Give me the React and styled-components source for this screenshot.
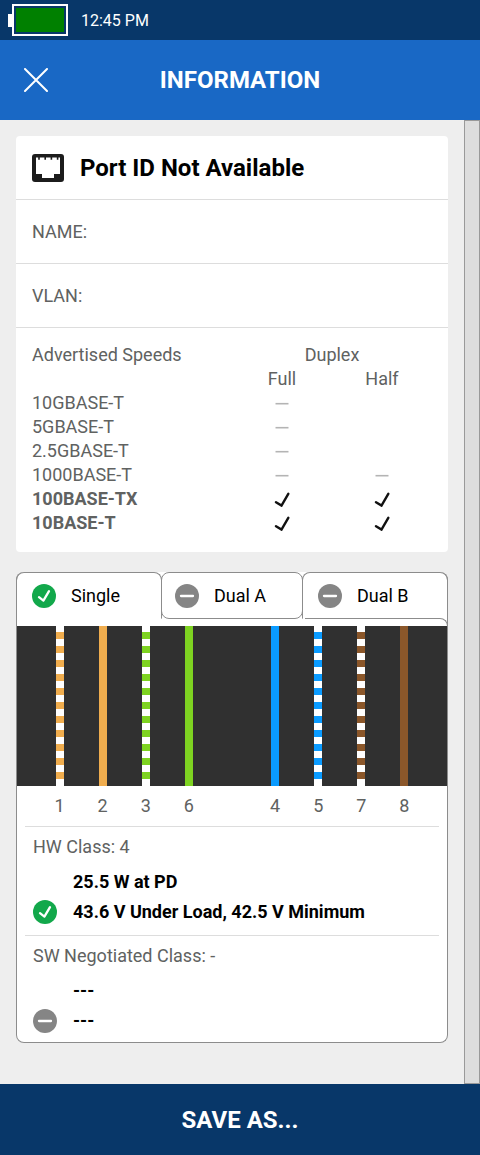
import React, { useState } from 'react'
import styled, { createGlobalStyle } from 'styled-components'

const GlobalStyle = createGlobalStyle`
  * {
    box-sizing: border-box;
  }
  body {
    margin: 0;
    font-family: Roboto, "Liberation Sans", sans-serif;
    font-size: 18px;
    background-color: #eeeeee;
  }
  button {
    border: 0;
    padding: 0;
    font: inherit;
    color: inherit;
    background: none;
    cursor: pointer;
  }
`

const Screen = styled.div`
  display: flex;
  flex-direction: column;
  min-height: 100vh;
`

const StatusBar = styled.div`
  display: flex;
  align-items: center;
  height: 40px;
  padding-left: 8px;
  background-color: #083769;
  color: white;
  font-size: 16px;
`

const BatteryTip = styled.div`
  width: 4px;
  height: 13px;
  background-color: white;
`

const Battery = styled.div`
  width: 56px;
  height: 32px;
  padding: 2px;
  margin-right: 13px;
  border: 2px solid white;
`

const Charge = styled.div`
  height: 100%;
  background-color: #008000;
`

const Header = styled.header`
  display: grid;
  grid-template-columns: 72px 1fr 72px;
  align-items: center;
  height: 80px;
  background-color: #1968c5;
  color: white;
`

const CloseButton = styled.button`
  display: flex;
  align-items: center;
  justify-content: center;
  height: 72px;
`

const Title = styled.h1`
  margin: 0;
  font-size: 24px;
  font-weight: 700;
  text-align: center;
`

const Main = styled.div`
  display: flex;
  flex: 1;
`

const Content = styled.main`
  display: flex;
  flex: 1;
  flex-direction: column;
  gap: 20px;
  min-width: 0;
  padding: 16px 16px 41px;
`

const ScrollTrack = styled.div`
  width: 16px;
  border: 1px solid #999999;
  background-color: #dddddd;
`

const Card = styled.section`
  border-radius: 4px;
  background-color: white;
`

const CardRow = styled.div`
  display: flex;
  align-items: center;
  gap: 16px;
  height: 64px;
  padding: 0 16px;
  border-bottom: 1px solid #dddddd;
  color: #606261;
`

const PortTitle = styled.h2`
  margin: 0;
  color: black;
  font-size: 24px;
  font-weight: 700;
`

const SpeedsBox = styled.div`
  padding: 15px 16px 17px;
`

const Speeds = styled.table`
  width: 100%;
  table-layout: fixed;
  border-collapse: collapse;
  color: #606261;
  line-height: 24px;

  th, td {
    height: 24px;
    padding: 0;
    font-weight: 400;
    text-align: center;
  }
  th:first-child {
    width: 50%;
    text-align: left;
  }
  svg {
    display: block;
    margin: 0 auto;
  }
`

const SpeedRow = styled.tr`
  && th {
    font-weight: ${props => props.$active ? 700 : 400};
  }
`

const Pairs = styled.section`
  border: 1px solid #8c8c8c;
  border-top: 0;
  border-radius: 8px;
  background-color: white;
`

const Tabs = styled.div`
  display: grid;
  grid-template-columns: 146fr 140fr 146fr;
  height: 46px;
  margin: 0 -1px;
`

const Tab = styled.button`
  display: flex;
  align-items: center;
  gap: 15px;
  height: 47px;
  padding: 0 ${props => props.$middle ? 13 : 15}px;
  border: 1px solid #8c8c8c;
  border-bottom-color: ${props => props.$middle ? '#8c8c8c' : 'transparent'};
  border-radius: ${props => props.$middle ? '8px' : '8px 8px 0 0'};
  margin: 0 ${props => props.$middle ? -1 : 0}px;
  color: black;
`

const TabLip = styled.div`
  height: 8px;
  margin: 0 -1px 0 67%;
  border: solid #8c8c8c;
  border-width: 1px 1px 0 0;
  border-radius: 0 8px 0 0;
`

const PinGrid = styled.div`
  display: grid;
  grid-template-columns: repeat(9, 1fr);
  justify-items: center;
  padding: 0 21px;
`

const Wires = styled(PinGrid)`
  height: 160px;
  background-color: #303030;
`

const Wire = styled.div`
  width: 8px;
  height: 100%;
  background: ${props => props.$striped
    ? `repeating-linear-gradient(white 0 6px, ${props.$color} 6px 13px, white 13px 14px)`
    : props.$color};
`

const Pins = styled(PinGrid)`
  color: #606261;
  line-height: 40px;
`

const PowerClass = styled.div`
  margin: 0 8px;
  padding: 10px 8px 8px;
  border-top: 1px solid #dddddd;

  &:last-child {
    padding-bottom: 6px;
  }
`

const ClassName = styled.div`
  margin-bottom: 10px;
  color: #606261;
  line-height: 20px;
`

const Reading = styled.div`
  display: grid;
  grid-template-columns: 24px 1fr;
  column-gap: 16px;
  align-items: center;
  height: 30px;
  font-weight: 700;
  line-height: 20px;
`

const ReadingText = styled.span`
  grid-column: 2;
`

const SaveButton = styled.button`
  && {
    height: 71px;
    background-color: #083769;
    color: white;
    font-size: 24px;
    font-weight: 700;
    line-height: 30px;
  }
`

const speeds = [
  { name: '10GBASE-T', full: 'no' },
  { name: '5GBASE-T', full: 'no' },
  { name: '2.5GBASE-T', full: 'no' },
  { name: '1000BASE-T', full: 'no', half: 'no' },
  { name: '100BASE-TX', full: 'yes', half: 'yes', active: true },
  { name: '10BASE-T', full: 'yes', half: 'yes', active: true },
]

// the empty slot keeps the gap between pins 6 and 4
const wires = [
  { pin: '1', color: '#f0ad4e', striped: true },
  { pin: '2', color: '#f0ad4e' },
  { pin: '3', color: '#7ed321', striped: true },
  { pin: '6', color: '#7ed321' },
  { pin: '', color: 'transparent' },
  { pin: '4', color: '#0a9bff' },
  { pin: '5', color: '#0a9bff', striped: true },
  { pin: '7', color: '#8b572a', striped: true },
  { pin: '8', color: '#8b572a' },
]

const tabs = [
  { name: 'Single', ok: true },
  { name: 'Dual A', ok: false },
  { name: 'Dual B', ok: false },
]

const CloseIcon = () => (
  <svg width="24" height="24" viewBox="0 0 24 24" fill="none" stroke="white" strokeWidth="2" strokeLinecap="round">
    <path d="M1 1L23 23M23 1L1 23" />
  </svg>
)

const PortIcon = () => (
  <svg width="32" height="28" viewBox="0 0 32 28">
    <rect width="32" height="28" rx="3" fill="#1c1c1c" />
    <path
      d="M4 3.5H6.2V5.8H7.8V3.5H12.4V5.8H14V3.5H18.6V5.8H20.2V3.5H24.8V5.8H26.4V3.5H28V20H22V24H10V20H4Z"
      fill="white"
    />
  </svg>
)

const StatusIcon = ({ ok }) => (
  <svg width="24" height="24" viewBox="0 0 24 24" fill="none" stroke="white" strokeWidth="2.3" strokeLinecap="round">
    <circle cx="12" cy="12" r="12" fill={ok ? '#12a84b' : '#858585'} stroke="none" />
    <path d={ok ? 'M7 13.2L11.4 16.6L17 7.2' : 'M6 12H18'} strokeLinejoin="round" />
  </svg>
)

const DuplexMark = ({ value }) => {
  if (!value) return null
  return (
    <svg width="16" height="16" viewBox="0 0 16 16" fill="none" role="img" aria-label={value}>
      {
        value === 'yes'
          ? <path d="M2 11.2L7.5 14.6L14.3 2.8" stroke="#111111" strokeWidth="2.4" strokeLinecap="round" />
          : <path d="M1.5 8.7H14.5" stroke="#b4b4b4" strokeWidth="1.6" />
      }
    </svg>
  )
}

const SpeedTable = () => (
  <Speeds>
    <thead>
      <tr>
        <th>Advertised Speeds</th>
        <th colSpan="2">Duplex</th>
      </tr>
      <tr>
        <th />
        <th>Full</th>
        <th>Half</th>
      </tr>
    </thead>
    <tbody>
      {speeds.map(({ name, full, half, active }) => (
        <SpeedRow key={name} $active={active}>
          <th scope="row">{name}</th>
          <td><DuplexMark value={full} /></td>
          <td><DuplexMark value={half} /></td>
        </SpeedRow>
      ))}
    </tbody>
  </Speeds>
)

const App = () => {
  const [selected, setSelected] = useState('Single')

  return (
    <Screen>
      <GlobalStyle />
      <StatusBar>
        <BatteryTip />
        <Battery><Charge /></Battery>
        12:45 PM
      </StatusBar>
      <Header>
        <CloseButton aria-label="Close"><CloseIcon /></CloseButton>
        <Title>INFORMATION</Title>
      </Header>
      <Main>
        <Content>
          <Card>
            <CardRow>
              <PortIcon />
              <PortTitle>Port ID Not Available</PortTitle>
            </CardRow>
            <CardRow>NAME:</CardRow>
            <CardRow>VLAN:</CardRow>
            <SpeedsBox>
              <SpeedTable />
            </SpeedsBox>
          </Card>
          <Pairs>
            <Tabs role="tablist">
              {tabs.map(({ name, ok }, index) => (
                <Tab
                  key={name}
                  role="tab"
                  aria-selected={selected === name}
                  $middle={index === 1}
                  onClick={() => setSelected(name)}
                >
                  <StatusIcon ok={ok} />
                  {name}
                </Tab>
              ))}
            </Tabs>
            <TabLip />
            <Wires>
              {wires.map(({ pin, color, striped }) => (
                <Wire key={pin} $color={color} $striped={striped} />
              ))}
            </Wires>
            <Pins>
              {wires.map(({ pin }) => <span key={pin}>{pin}</span>)}
            </Pins>
            <PowerClass>
              <ClassName>HW Class: 4</ClassName>
              <Reading><ReadingText>25.5 W at PD</ReadingText></Reading>
              <Reading>
                <StatusIcon ok />
                <ReadingText>43.6 V Under Load, 42.5 V Minimum</ReadingText>
              </Reading>
            </PowerClass>
            <PowerClass>
              <ClassName>SW Negotiated Class: -</ClassName>
              <Reading><ReadingText>---</ReadingText></Reading>
              <Reading>
                <StatusIcon />
                <ReadingText>---</ReadingText>
              </Reading>
            </PowerClass>
          </Pairs>
        </Content>
        <ScrollTrack />
      </Main>
      <SaveButton>SAVE AS...</SaveButton>
    </Screen>
  )
}

export default App
